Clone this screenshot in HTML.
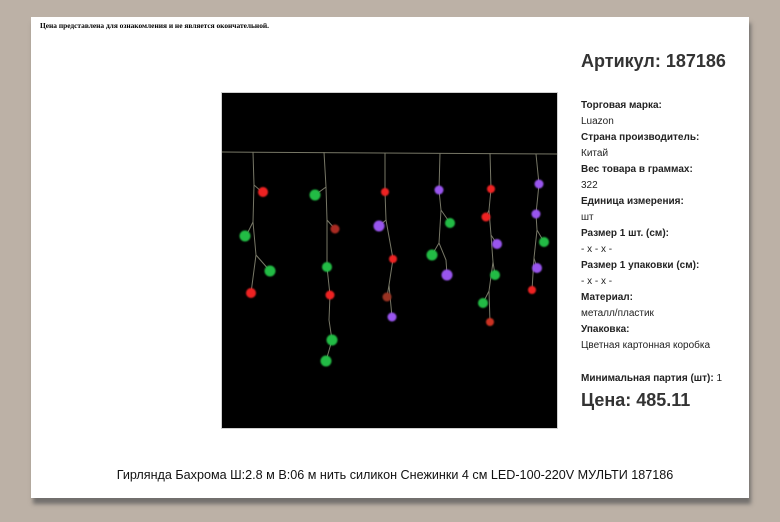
<!DOCTYPE html>
<html><head><meta charset="utf-8"><style>
html,body{margin:0;padding:0;}
body{width:780px;height:522px;background:#bcb1a6;position:relative;overflow:hidden;font-family:"Liberation Sans",Arial,sans-serif;color:#222;}
.card{position:absolute;left:31px;top:17px;width:718px;height:481px;background:#fff;box-shadow:2px 6px 4px rgba(90,90,90,0.75);}
.t{position:absolute;white-space:nowrap;line-height:1;}
.note{left:40px;top:22px;font-family:"Liberation Serif",serif;font-size:7.4px;font-weight:bold;color:#000;}
.img{position:absolute;left:221px;top:92px;width:335px;height:335px;background:#000;border:1px solid #cfcfcf;}
.r{left:581px;font-size:10px;}
.b{font-weight:bold;}
</style></head><body>
<div class="card"></div>
<div class="t note">Цена представлена для ознакомления и не является окончательной.</div>
<div class="img">
<svg width="335" height="335" viewBox="222 93 335 335" xmlns="http://www.w3.org/2000/svg">
<defs><filter id="g"><feGaussianBlur stdDeviation="0.9"/></filter></defs>
<g stroke="#777766" stroke-width="1" fill="none">
<path d="M222 152 L557 154"/>
<path d="M253 152 L254 185 L262 192 M254 185 L253 222 L246 236 M253 222 L256 255 L270 271 M256 255 L251 293"/>
<path d="M324 152 L326 187 L315 195 M326 187 L327 220 L335 229 M327 220 L327 267 L330 295 L329 320 L332 340 L326 361"/>
<path d="M385 153 L385 192 L386 220 L379 226 M386 220 L393 259 L389 285 L387 297 M389 285 L392 317"/>
<path d="M440 153 L439 190 L441 210 L450 223 M441 210 L439 243 L432 255 M439 243 L446 260 L447 275"/>
<path d="M490 153 L491 189 L489 210 L486 217 M489 210 L491 235 L497 244 M491 235 L493 262 L495 275 M493 262 L489 291 L483 303 M489 291 L490 322"/>
<path d="M536 154 L539 184 L536 214 L537 230 L544 242 M537 230 L534 258 L537 268 M534 258 L532 290"/>
</g>
<g filter="url(#g)">
<g fill="#ee2222"><circle cx="263" cy="192" r="5"/><circle cx="251" cy="293" r="5"/><circle cx="335" cy="229" r="4.5" fill="#aa2a22"/><circle cx="330" cy="295" r="4.5"/><circle cx="385" cy="192" r="4"/><circle cx="393" cy="259" r="4"/><circle cx="387" cy="297" r="4.5" fill="#993322"/><circle cx="491" cy="189" r="4"/><circle cx="486" cy="217" r="4.5"/><circle cx="490" cy="322" r="4" fill="#cc3322"/><circle cx="532" cy="290" r="4"/></g>
<g fill="#22bb44"><circle cx="245" cy="236" r="5.5"/><circle cx="270" cy="271" r="5.5"/><circle cx="315" cy="195" r="5.5"/><circle cx="327" cy="267" r="5"/><circle cx="332" cy="340" r="5.5"/><circle cx="326" cy="361" r="5.5"/><circle cx="450" cy="223" r="5"/><circle cx="432" cy="255" r="5.5"/><circle cx="495" cy="275" r="5"/><circle cx="483" cy="303" r="5"/><circle cx="544" cy="242" r="5"/></g>
<g fill="#9955ee"><circle cx="379" cy="226" r="5.5"/><circle cx="392" cy="317" r="4.5"/><circle cx="439" cy="190" r="4.5"/><circle cx="447" cy="275" r="5.5"/><circle cx="497" cy="244" r="5"/><circle cx="539" cy="184" r="4.5"/><circle cx="536" cy="214" r="4.5"/><circle cx="537" cy="268" r="5"/></g>
</g>
</svg>
</div>
<div class="t b" style="left:581px;top:52px;font-size:18px;color:#333;">Артикул: 187186</div>
<div class="t r b" style="top:101px">Торговая марка:</div>
<div class="t r" style="top:117px">Luazon</div>
<div class="t r b" style="top:133px">Страна производитель:</div>
<div class="t r" style="top:149px">Китай</div>
<div class="t r b" style="top:165px">Вес товара в граммах:</div>
<div class="t r" style="top:181px">322</div>
<div class="t r b" style="top:197px">Единица измерения:</div>
<div class="t r" style="top:213px">шт</div>
<div class="t r b" style="top:229px">Размер 1 шт. (см):</div>
<div class="t r" style="top:245px">- x - x -</div>
<div class="t r b" style="top:261px">Размер 1 упаковки (см):</div>
<div class="t r" style="top:277px">- x - x -</div>
<div class="t r b" style="top:293px">Материал:</div>
<div class="t r" style="top:309px">металл/пластик</div>
<div class="t r b" style="top:325px">Упаковка:</div>
<div class="t r" style="top:341px">Цветная картонная коробка</div>
<div class="t r" style="top:374px"><b>Минимальная партия (шт):</b> 1</div>
<div class="t b" style="left:581px;top:391px;font-size:18px;color:#333;">Цена: 485.11</div>
<div class="t" style="left:0;width:790px;text-align:center;top:469px;font-size:12.6px;color:#111;">Гирлянда Бахрома Ш:2.8 м В:06 м нить силикон Снежинки 4 см LED-100-220V МУЛЬТИ 187186</div>
</body></html>
